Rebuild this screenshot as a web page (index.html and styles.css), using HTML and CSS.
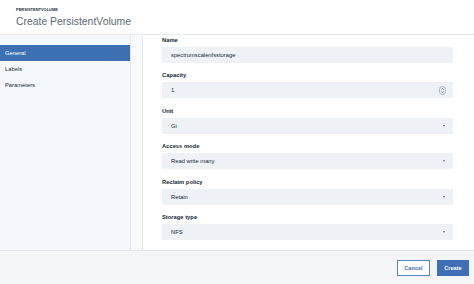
FILE: index.html
```html
<!DOCTYPE html>
<html>
<head>
<meta charset="utf-8">
<link rel="stylesheet" href="styles.css">
</head>
<body>
<div class="page">
  <header class="header">
    <div class="eyebrow">PERSISTENTVOLUME</div>
    <h1 class="title">Create PersistentVolume</h1>
  </header>
  <div class="main">
    <nav class="sidebar">
      <div class="nav-item active">General</div>
      <div class="nav-item">Labels</div>
      <div class="nav-item">Parameters</div>
    </nav>
    <div class="gutter"></div>
    <section class="content">
      <div class="field">
        <div class="label">Name</div>
        <div class="input">spectrumscalenfsstorage</div>
      </div>
      <div class="field">
        <div class="label">Capacity</div>
        <div class="input">1
          <svg class="spin" width="7" height="9" viewBox="0 0 7 9"><rect x="0.5" y="0.5" width="6" height="8" rx="3" fill="none" stroke="#9aa4ae" stroke-width="0.8"/><path d="M2.2 3.6 L3.5 2.4 L4.8 3.6 M2.2 5.4 L3.5 6.6 L4.8 5.4" fill="none" stroke="#5a6872" stroke-width="0.8"/></svg>
        </div>
      </div>
      <div class="field">
        <div class="label">Unit</div>
        <div class="input select">Gi<span class="caret"></span></div>
      </div>
      <div class="field">
        <div class="label">Access mode</div>
        <div class="input select">Read write many<span class="caret"></span></div>
      </div>
      <div class="field">
        <div class="label">Reclaim policy</div>
        <div class="input select">Retain<span class="caret"></span></div>
      </div>
      <div class="field">
        <div class="label">Storage type</div>
        <div class="input select">NFS<span class="caret"></span></div>
      </div>
    </section>
  </div>
  <footer class="footer">
    <button class="btn secondary">Cancel</button>
    <button class="btn primary">Create</button>
  </footer>
</div>
</body>
</html>
```

FILE: styles.css
```css
* { box-sizing: border-box; }
html, body { margin: 0; padding: 0; }
body {
  font-family: "Liberation Sans", Arial, sans-serif;
  background: #fff;
  color: #152935;
}
.page {
  width: 474px;
  height: 284px;
  display: flex;
  flex-direction: column;
  overflow: hidden;
}
.header {
  height: 35px;
  flex: none;
  padding: 7px 0 0 16px;
  border-bottom: 1px solid #e9ecef;
}
.eyebrow {
  font-size: 3.9px;
  font-weight: bold;
  color: #152935;
  letter-spacing: 0.05px;
  line-height: 5px;
}
.title {
  margin: 3px 0 0;
  font-size: 10.4px;
  font-weight: normal;
  color: #5a6872;
  line-height: 14px;
}
.main {
  flex: 1;
  display: flex;
  min-height: 0;
}
.sidebar {
  width: 131px;
  flex: none;
  background: #f4f7fb;
  border-right: 1px solid #e4e8ed;
  padding-top: 10px;
}
.gutter {
  width: 12px;
  flex: none;
  background: #f9fafb;
  border-right: 1px solid #e6e9ec;
}
.nav-item {
  height: 16px;
  line-height: 16px;
  padding-left: 5px;
  font-size: 5.8px;
  color: #152935;
}
.nav-item.active {
  background: #3d70b2;
  color: #fff;
}
.content {
  flex: 1;
  padding: 1px 21px 0 19px;
  overflow: hidden;
}
.field {
  margin-bottom: 8.4px;
}
.label {
  height: 8px;
  line-height: 8px;
  font-size: 5.8px;
  font-weight: bold;
  color: #152935;
  margin-bottom: 3px;
}
.input {
  height: 16px;
  line-height: 16px;
  background: #eef1f6;
  padding-left: 9px;
  font-size: 5.8px;
  color: #152935;
  position: relative;
  display: flex;
  align-items: center;
}
.spin {
  position: absolute;
  right: 7px;
  top: 3.5px;
}
.caret {
  position: absolute;
  right: 8px;
  top: 7px;
  width: 0;
  height: 0;
  border-left: 1.8px solid transparent;
  border-right: 1.8px solid transparent;
  border-top: 2px solid #5a6872;
}
.footer {
  height: 34px;
  flex: none;
  background: #f3f5f7;
  border-top: 1px solid #e3e7eb;
  display: flex;
  justify-content: flex-end;
  align-items: center;
  gap: 7px;
  padding: 0 5px 0 0;
}
.btn {
  height: 16px;
  font-family: "Liberation Sans", Arial, sans-serif;
  font-size: 5.6px;
  font-weight: bold;
  padding: 0;
  border-radius: 0;
}
.btn.secondary {
  width: 33px;
  background: #fff;
  color: #3d70b2;
  border: 1px solid #5b82ba;
}
.btn.primary {
  width: 32px;
  background: #3d70b2;
  color: #fff;
  border: 1px solid #3d70b2;
}
```
